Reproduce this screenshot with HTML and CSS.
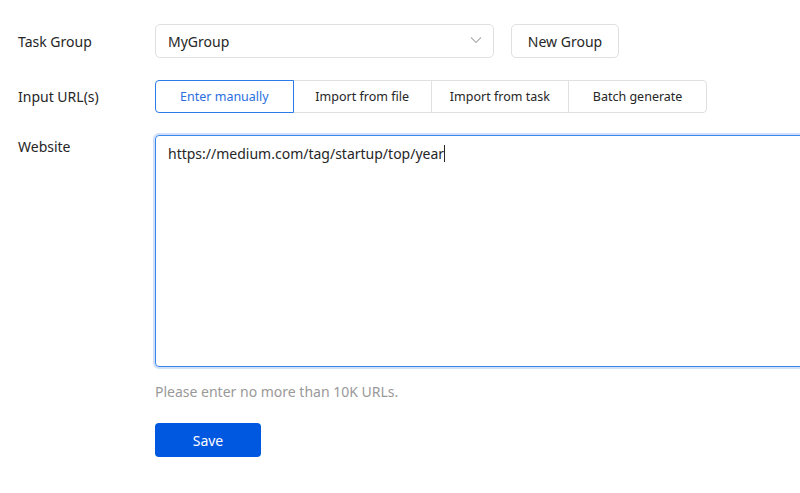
FILE: index.html
```html
<!DOCTYPE html>
<html lang="en">
  <head>
    <meta charset="UTF-8" />
    <title>Task Settings</title>
    <link rel="stylesheet" href="styles.css">
  </head>
  <body>
    <form class="task-form">
      <div class="row">
        <label class="label">Task Group</label>
        <div class="controls">
          <div class="select">
            <span>MyGroup</span>
            <svg class="arrow" width="12" height="8" viewBox="0 0 12 8">
              <path d="M1 1.5 L6 6.5 L11 1.5" fill="none" stroke="#b0b0b0" stroke-width="1.1" />
            </svg>
          </div>
          <button type="button" class="btn">New Group</button>
        </div>
      </div>

      <div class="row">
        <label class="label">Input URL(s)</label>
        <div class="segments">
          <button type="button" class="segment active">Enter manually</button>
          <button type="button" class="segment">Import from file</button>
          <button type="button" class="segment">Import from task</button>
          <button type="button" class="segment">Batch generate</button>
        </div>
      </div>

      <div class="row row-top">
        <label class="label label-top">Website</label>
        <div class="field">
          <div class="textarea">https://medium.com/tag/startup/top/year<span class="caret"></span></div>
          <p class="hint">Please enter no more than 10K URLs.</p>
          <button type="button" class="btn-primary">Save</button>
        </div>
      </div>
    </form>
  </body>
</html>
```

FILE: styles.css
```css
* {
  box-sizing: border-box;
}

body {
  margin: 0;
  background: #fff;
  font-family: "Noto Sans", "Open Sans", sans-serif;
  color: #262626;
  overflow: hidden;
  width: 800px;
  height: 493px;
}

.task-form {
  padding: 24px 0 0 18px;
}

.row {
  display: flex;
  align-items: center;
  margin-bottom: 22px;
}

.row-top {
  align-items: flex-start;
  margin-bottom: 0;
}

.label {
  width: 137px;
  flex-shrink: 0;
  font-size: 14px;
  color: #262626;
}

.label-top {
  padding-top: 2px;
}

.controls {
  display: flex;
  gap: 17px;
}

.select {
  width: 339px;
  height: 34px;
  border: 1px solid #e0e0e0;
  border-radius: 5px;
  display: flex;
  align-items: center;
  justify-content: space-between;
  padding: 0 11px 0 12px;
  font-size: 14px;
}

.arrow {
  margin-top: -2px;
}

.btn {
  width: 108px;
  height: 34px;
  border: 1px solid #e0e0e0;
  border-radius: 5px;
  background: #fff;
  font-family: inherit;
  font-size: 14px;
  color: #262626;
}

.segments {
  display: flex;
}

.segment {
  width: 138.75px;
  height: 33px;
  border: 1px solid #e0e0e0;
  margin-left: -1px;
  background: #fff;
  font-family: inherit;
  font-size: 12.5px;
  color: #262626;
}

.segment:first-child {
  margin-left: 0;
  border-radius: 4px 0 0 4px;
}

.segment:last-child {
  border-radius: 0 4px 4px 0;
}

.segment.active {
  border-color: #2d7be8;
  color: #2a6ee0;
  position: relative;
  z-index: 1;
}

.field {
  flex: 1;
  min-width: 0;
  padding: 2px 0 0 2px;
  margin: -2px 0 0 -2px;
  overflow: hidden;
}

.textarea {
  width: 680px;
  height: 232px;
  border: 1px solid #3a86ec;
  border-radius: 4px;
  box-shadow: 0 0 0 2px #cfe0f8;
  padding: 8px 12px;
  font-size: 14px;
  color: #262626;
}

.caret {
  display: inline-block;
  width: 1px;
  height: 17px;
  background: #262626;
  vertical-align: -3px;
}

.hint {
  margin: 15px 0 0;
  font-size: 14px;
  color: #999;
}

.btn-primary {
  margin-top: 22px;
  width: 106px;
  height: 34px;
  border: none;
  border-radius: 4px;
  background: #0057e0;
  color: #fff;
  font-family: inherit;
  font-size: 14px;
}
```
